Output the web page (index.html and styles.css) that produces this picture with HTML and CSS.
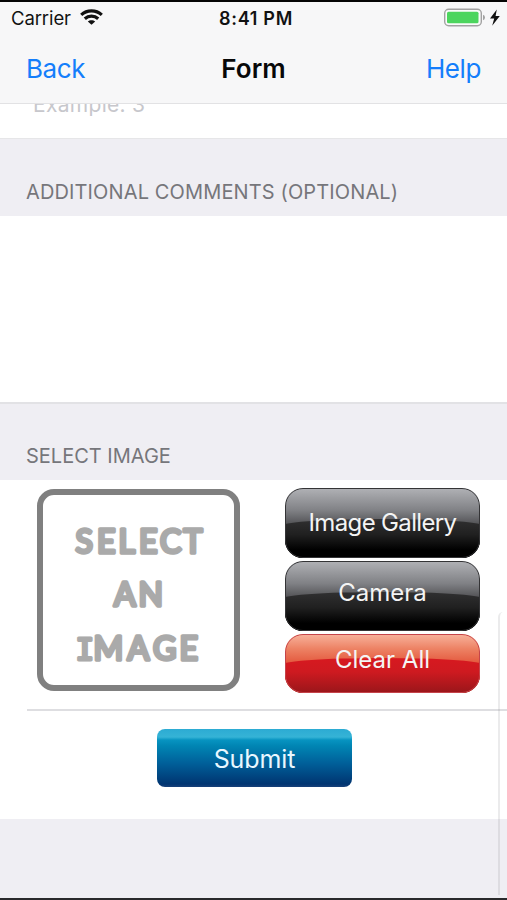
FILE: index.html
```html
<!DOCTYPE html>
<html lang="en">
<head>
<meta charset="utf-8">
<title>Form</title>
<link rel="stylesheet" href="styles.css">
</head>
<body>
<div class="screen">
  <header class="header">
    <div class="status">
      <div class="carrier"><span class="carrier-name">Carrier</span>
        <svg class="wifi" width="23" height="16" viewBox="0 0 23 16" fill="none" stroke="#111" stroke-width="3.2"><path d="M1.2 5.9C7 .6 16 .6 21.8 5.9"/><path d="M4.8 9.8C8.6 6.3 14.4 6.3 18.2 9.8"/><path d="M11.5 15.8 7.8 12.4C9.8 10.7 13.2 10.7 15.2 12.4Z" fill="#111" stroke="none"/></svg>
      </div>
      <div class="time">8:41 PM</div>
      <div class="power">
        <svg width="57" height="20" viewBox="0 0 57 20"><rect x="0.7" y="1.2" width="36.6" height="16.6" rx="4" fill="#fbfbfb" stroke="#a2a2a2" stroke-width="1.4"/><rect x="3" y="3.7" width="31.5" height="11.6" rx="1.5" fill="#4cd55e"/><path d="M39 6.7Q41 7.5 41 9.5T39 12.3Z" fill="#a2a2a2"/><path d="M52.8 1.6 46 10.6H50.2L48.2 17.8 55.8 8H51.6Z" fill="#111"/></svg>
      </div>
    </div>
    <nav class="nav">
      <a class="link back">Back</a>
      <h1 class="title">Form</h1>
      <a class="link help">Help</a>
    </nav>
  </header>
  <main>
    <div class="field"><span class="placeholder">Example: 3</span></div>
    <h2 class="section comments-title"><span>ADDITIONAL COMMENTS (OPTIONAL)</span></h2>
    <div class="comments"></div>
    <h2 class="section image-title"><span>SELECT IMAGE</span></h2>
    <div class="image-row">
      <div class="picker">
        <svg width="190" height="190" viewBox="0 0 190 190" class="picker-text">
          <text x="32.5 54 75.5 96 117 140.5" y="57.5">SELECT</text>
          <text x="71 95.5" y="111">AN</text>
          <text y="164.5"><tspan x="32.5" class="slab">I</tspan><tspan x="50.5 84.5 110 136.5">MAGE</tspan></text>
        </svg>
      </div>
      <div class="buttons">
        <div class="btn dark"><span class="t-gallery">Image Gallery</span></div>
        <div class="btn dark"><span class="t-camera">Camera</span></div>
        <div class="btn red"><span class="t-clear">Clear All</span></div>
      </div>
    </div>
    <div class="submit-row"><div class="submit"><span>Submit</span></div></div>
  </main>
  <div class="scroll-edge"></div>
</div>
</body>
</html>
```
FILE: styles.css
```css
* { box-sizing: border-box; }
body { margin: 0; font-family: Inter, "Liberation Sans", sans-serif; background: #efeef3; }
.screen { position: relative; width: 507px; height: 900px; overflow: hidden; background: #efeef3; border-top: 2px solid #050505; border-bottom: 2px solid #29292b; }
.header { position: relative; z-index: 1; height: 102px; background: #f7f7f8; border-bottom: 1px solid #e2e2e4; }
.status { display: grid; grid-template-columns: 1fr auto 1fr; align-items: center; height: 32px; padding: 0 6px 0 11px; color: #111; font-size: 18.5px; }
.carrier { display: flex; align-items: center; gap: 9px; }
.carrier-name { letter-spacing: -0.1px; }
.wifi { margin-top: -2px; }
.time { font-weight: 600; font-size: 18px; letter-spacing: 0.7px; }
.power { display: flex; justify-content: flex-end; margin-top: -1px; }
.nav { display: grid; grid-template-columns: 1fr auto 1fr; align-items: center; height: 69px; padding: 0 26px; }
.link { color: #147efb; font-size: 26px; letter-spacing: -0.4px; }
.help { text-align: right; }
.title { margin: 0; font-size: 26px; font-weight: 600; letter-spacing: 0; color: #080808; }
.field { height: 34px; overflow: hidden; background: #fff; }
.placeholder { display: block; margin: -12px 0 0 33px; font-size: 21px; line-height: 26px; letter-spacing: 0.3px; color: #c7c7cc; }
.section { display: flex; align-items: flex-end; margin: 0; padding: 0 26px; color: #76767b; font-size: 20px; font-weight: 400; line-height: 24px; }
.comments-title { height: 78px; padding-bottom: 12px; border-top: 1px solid #e6e6e8; letter-spacing: 0.13px; }
.comments { height: 186px; background: #fff; }
.image-title { height: 78px; padding-bottom: 12px; border-top: 2px solid #e2e2e5; letter-spacing: 0; }
.image-row { display: flex; gap: 45px; height: 229px; padding: 9px 0 0 37px; background: #fff; }
.picker { width: 203px; height: 202px; border: 6px solid #808080; border-radius: 17px; }
.picker-text { display: block; fill: #aaa; stroke: #aaa; stroke-width: 3.6; stroke-linejoin: round; font: 400 32px Lato, sans-serif; }
.slab { font-family: "DejaVu Sans Mono", monospace; font-size: 31px; stroke-width: 3; }
.buttons { display: flex; flex-direction: column; gap: 3px; width: 195px; margin-top: -1px; }
.btn { position: relative; display: flex; justify-content: center; align-items: center; overflow: hidden; height: 70px; border-radius: 18px; color: #f4f4f4; font-size: 24px; }
.btn::before { content: ""; position: absolute; left: -8px; right: -8px; bottom: 0; border-radius: 50% 50% 0 0 / 8px 8px 0 0; }
.btn::after { content: ""; position: absolute; inset: 0; border-radius: inherit; }
.btn span { position: relative; z-index: 1; white-space: nowrap; }
.dark { background: linear-gradient(#b1b2b6, #808185 32%, #3f3f42 60%, #222 80%); }
.dark::before { height: 39px; background: linear-gradient(#303031, #202020 40%, #000 80%); }
.dark::after { border: 1.5px solid #343436; }
.dark .t-gallery { letter-spacing: -0.65px; margin-top: -1px; }
.dark .t-camera { margin-top: -7px; }
.red { height: 59px; background: linear-gradient(#f8b39d, #ed8264 25%, #e04a30 58%); }
.red::before { height: 35px; background: linear-gradient(#d71920, #ce1a20 40%, #99161a); }
.red::after { border: 1px solid #c5444a; }
.red span { margin-top: -8px; }
.submit-row { display: flex; justify-content: center; height: 110px; padding: 18px 0 0 2px; background: #fff; border-style: solid; border-width: 2px 0 0; border-image: linear-gradient(to right, #fff 29px, #dedee1 29px) 2; }
.submit { display: flex; justify-content: center; align-items: center; width: 195px; height: 58px; border-radius: 8px; background: linear-gradient(#2cabd3, #35b3d6 8px, #0794c1 11px, #0085b3 17px, #00609a 34px, #003571 55px, #174079); color: #e9f7ff; font-size: 25px; }
.submit span { letter-spacing: -0.1px; margin-top: 2px; }
.scroll-edge { position: absolute; left: 498px; top: 610px; width: 12px; height: 283px; border-left: 2px solid rgba(120, 120, 130, .15); border-radius: 5px 0 0 0; }
```
